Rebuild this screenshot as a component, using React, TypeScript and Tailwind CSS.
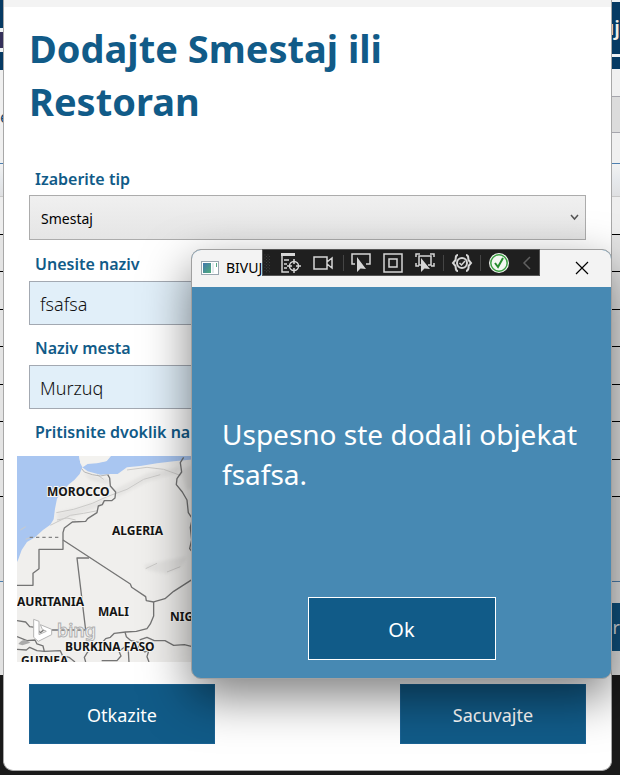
import React, { useState } from "react";

const sans = "font-['Noto_Sans','Open_Sans',sans-serif]";
const tableRows = [1, 2, 3, 4, 5, 6, 7];

function AppBehind() {
  return (
    <div aria-hidden="true" className="absolute inset-0 flex flex-col overflow-hidden bg-[#1a1a1a]">
      <div className="flex justify-between bg-[#eef1f3]">
        <div className="w-1/2">
          <div className="h-7 bg-[#063a63]" />
          <div className="mt-1 h-4 bg-[#34305a]" />
          <div className="mt-1 h-[18px] bg-[#063a63]" />
        </div>
        <div className="w-1/2 pt-0.5">
          <div className="flex h-[52px] items-center justify-end overflow-hidden bg-[#063a63] text-xl font-semibold text-[#f3eee6]">
            uj
          </div>
          <div className="mt-[3px] h-3 bg-[#063a63]" />
        </div>
      </div>
      <div className="flex h-[94px] items-center justify-between border-b border-[#4d7faf] bg-[#f0f0f0]">
        <div className="w-1 overflow-hidden text-base text-[#16486f]">e</div>
        <div className="mb-1 h-[37px] w-1/2 border-y border-[#a6a6ad] bg-[#dcdcdc]" />
      </div>
      <div className="h-[33px] border-b border-[#c8c8c8] bg-linear-to-b from-[#f2f2f2] via-[#e6e9ec] to-[#dfe0e2]" />
      <div className="h-[38px] border-b border-black bg-[#eeeeee]" />
      <div className="grid h-[262px] grid-rows-7">
        {tableRows.map((row) => (
          <div key={row} className="border-b border-black bg-[#e4e4e4]" />
        ))}
      </div>
      <div className="h-[85px] border-b border-[#4d7faf] bg-[#dddddd]" />
      <div className="flex h-[93px] items-center justify-end bg-[#e2e2e2]">
        <div className="mb-1 flex h-12 w-44 items-center justify-end bg-[#0f527f] text-lg text-[#d8dde2]">or</div>
      </div>
    </div>
  );
}

function MapPicture() {
  return (
    <svg className="h-full w-full" role="img" aria-label="Bing mapa">
      <defs>
        <filter id="relief" x="-10%" y="-10%" width="120%" height="120%">
          <feGaussianBlur stdDeviation="5" />
        </filter>
      </defs>
      <g transform="scale(0.3333) translate(-50 -18)">
        <rect x="50" y="18" width="1800" height="620" fill="#f0efed" />
        <path d="M50 18H236L240 40L246 52L238 72L222 90L204 104L186 124L170 146L164 176L160 208L150 224L128 240L104 262L80 276L64 300L54 328L50 336Z" fill="#a9c6f1" />
        <path d="M246 52L262 42L290 40L318 34L330 18H600V26L560 30L520 34L470 40L420 48L380 52L352 72L332 72L300 74L262 64Z" fill="#a9c6f1" />
        <path d="M236 18H332L320 32L290 38L262 40L250 50L240 38Z" fill="#f3f2ef" />
        <g fill="#dedddb" opacity="0.6" filter="url(#relief)">
          <path d="M170 188L240 170L330 140L300 168L230 196L172 214Z" />
          <path d="M340 120L440 70L540 50L530 70L440 96L350 142Z" />
          <path d="M430 345L500 330L560 320L540 352L500 372L440 360Z" />
          <path d="M250 70L330 90L320 104L270 90Z" />
          <path d="M540 60L590 40V110L560 120Z" />
        </g>
        <g fill="none" stroke="#cbcac8" strokeWidth="3">
          <path d="M168 188L220 178L276 160L320 140L380 118L430 88L480 74" />
          <path d="M150 226L210 196L250 190L292 182M380 60L440 52L490 58L540 76M436 356L470 340M500 366L540 350" />
          <path d="M170 210L200 204L226 210M290 74L310 88M60 240L76 230M76 268L92 262" />
        </g>
        <g fill="none" stroke="#747474" strokeWidth="4" strokeLinejoin="round">
          <path d="M322 74L328 84L330 108L346 126L344 144L334 152H312L306 164L294 168L290 188L262 206L256 214L216 216L192 234L188 248V298H116V356L98 370V406H50" />
          <path d="M188 270L390 402L394 412L436 440L438 452L460 456L494 446L520 424L576 388" />
          <path d="M266 324H230L256 540H130L120 548L104 532L88 530L76 516L50 512" />
          <path d="M460 456V498L450 522L440 536L408 544L376 546L342 550L330 562L316 566L304 580L288 578L276 594L262 606L252 622L256 636" />
          <path d="M550 22L540 38L544 66L530 86L528 104L546 126L560 150L564 188L576 206L570 232L574 270L568 296L576 306" />
          <path d="M374 546L378 560L392 572L418 578L414 594L434 606L446 600L440 620L446 636M418 570L440 562L462 572H494L520 586L552 584L576 590" />
          <path d="M50 560L80 572L104 570L110 582L128 588L132 604L180 602L186 616L206 622L224 636M50 598L78 600L88 592L110 602L132 604M304 632H350L362 618L356 604L372 592L384 604L386 636" />
        </g>
        <path d="M244 56L252 66L276 74L300 78L322 74" fill="none" stroke="#b5b5b5" strokeWidth="3" />
        <path d="M88 262H176" fill="none" stroke="#858585" strokeWidth="4" strokeDasharray="10 9" />
        <path d="M54 582Q70 560 90 578L66 586Z" fill="#aaa" />
        <path d="M100 508L116 514V554L138 544L126 538L120 524L154 538V554L114 574L100 562Z" fill="#fff" stroke="#b5b5b5" strokeWidth="3" />
      </g>
      <text x="40" y="181" fontSize="18" fontWeight="600" fill="#f6f6f6" stroke="#b0b0b0" strokeWidth="1">bing</text>
      <g fill="#151515" fontSize="12" fontWeight="700" stroke="#f7f6f4" strokeWidth="2" paintOrder="stroke">
        <text x="30" y="40">MOROCCO</text>
        <text x="95" y="79">ALGERIA</text>
        <text x="0" y="150">AURITANIA</text>
        <text x="81" y="160">MALI</text>
        <text x="153" y="165">NIGER</text>
        <text x="48" y="195">BURKINA FASO</text>
        <text x="4" y="209">GUINEA</text>
      </g>
    </svg>
  );
}

const toolButton = "flex h-6 w-6 shrink-0 items-center justify-center";

function DebugToolbar() {
  return (
    <div role="toolbar" aria-label="Debug" className="absolute -top-px left-[70px] flex h-[27px] w-[278px] items-center border border-[#555555] bg-[#1f1f1f] text-[#d6d6d6]">
      <svg width="10" height="24" viewBox="0 0 10 24" fill="#5a5a5a">
        {[2, 6, 10, 14, 18, 22].map((y) => (
          <g key={y}>
            <rect x="2" y={y - 1} width="1" height="1" />
            <rect x="6" y={y - 1} width="1" height="1" />
            <rect x="4" y={y + 1} width="1" height="1" />
            <rect x="8" y={y + 1} width="1" height="1" />
          </g>
        ))}
      </svg>
      <button aria-label="Live Visual Tree" className={`ml-2 ${toolButton}`}>
        <svg width="22" height="22" viewBox="0 0 22 22" fill="none" stroke="currentColor" strokeWidth="1.5">
          <path d="M1 1H15V4H1Z" fill="currentColor" stroke="none" />
          <path d="M2 4V20H9M4 8H9M4 12H7M4 16H7" />
          <circle cx="14" cy="14" r="4.500" />
          <path d="M14 7V12M14 16V21M7 14H12M16 14H21" />
        </svg>
      </button>
      <button aria-label="Record" className={`ml-2 ${toolButton}`}>
        <svg width="22" height="22" viewBox="0 0 22 22" fill="none" stroke="currentColor" strokeWidth="1.5">
          <path d="M2 5H15V17H2ZM15 10L20 6V16L15 12" />
        </svg>
      </button>
      <span className="ml-2 h-4 w-px bg-[#454545]" />
      <button aria-label="Select element" className={`ml-1.5 ${toolButton}`}>
        <svg width="22" height="22" viewBox="0 0 22 22" fill="none" stroke="currentColor" strokeWidth="1.5">
          <path d="M5 12H2V2H20V12H16" />
          <path d="M7 5V20L10.500 16.500L16 17Z" fill="currentColor" stroke="none" />
        </svg>
      </button>
      <button aria-label="Display layout adorners" className={`ml-2 ${toolButton}`}>
        <svg width="22" height="22" viewBox="0 0 22 22" fill="none" stroke="currentColor" strokeWidth="1.500">
          <path d="M2 2H20V20H2ZM7 7H15V15H7Z" />
        </svg>
      </button>
      <button aria-label="Track focused element" className={`ml-2 ${toolButton}`}>
        <svg width="22" height="22" viewBox="0 0 22 22" fill="none" stroke="currentColor" strokeWidth="1.5">
          <path d="M2 5V2H6M16 2H20V5M2 11V14H5M20 11V14H17M7 13H5V4H17V13H14" />
          <path d="M7 6V20L10.500 16.500L16 17Z" fill="currentColor" stroke="none" />
        </svg>
      </button>
      <span className="ml-1.5 h-4 w-px bg-[#454545]" />
      <button aria-label="Binding failures" className={`ml-1.5 ${toolButton}`}>
        <svg width="22" height="22" viewBox="0 0 22 22" fill="none" stroke="currentColor" strokeWidth="2">
          <path d="M7 3C4 3 5 6 4.500 8L2 11L4.500 14C5 16 4 19 7 19M15 3C18 3 17 6 17.500 8L20 11L17.500 14C18 16 17 19 15 19" />
          <circle cx="11" cy="11" r="5" />
          <path d="M8.500 11L10.500 13L14 9" strokeWidth="1.500" />
        </svg>
      </button>
      <span className="ml-1.5 h-4 w-px bg-[#454545]" />
      <button aria-label="Hot Reload" className={`ml-1.5 ${toolButton}`}>
        <svg width="22" height="22" viewBox="0 0 22 22" fill="none">
          <circle cx="11" cy="11" r="10" fill="#f3f7f2" />
          <circle cx="11" cy="11" r="8.200" stroke="#3da044" strokeWidth="1.500" />
          <path d="M7 11L10 15L15 6" stroke="#258b2d" strokeWidth="2" />
        </svg>
      </button>
      <button aria-label="Collapse" className={`ml-1 ${toolButton} text-[#606060]`}>
        <svg width="12" height="16" viewBox="0 0 12 16" fill="none" stroke="currentColor" strokeWidth="1.500">
          <path d="M9 2L3 8L9 14" />
        </svg>
      </button>
    </div>
  );
}

const labelStyle = "block pl-1.5 text-base leading-6 font-semibold text-[#115b88]";
const inputStyle = "mt-[5px] mb-[11px] block h-11 w-full border border-[#a3a9b2] bg-[#e1eff9] px-2.5 pt-0.5 text-lg font-light text-[#111111] outline-none";
const formButton = "h-[60px] w-[186px] border border-[#1a6293] bg-[#115b88] pt-0.5 text-lg text-white";

function AddWindow() {
  const [name, setName] = useState("fsafsa");
  const [place, setPlace] = useState("Murzuq");
  return (
    <main className="relative mr-2 ml-[3px] overflow-hidden rounded-b-[10px] border-x border-b border-[#a8a8a8] bg-white">
      <div className="h-[7px] bg-[#f3f3f3]" />
      <form className="px-[25px] pt-[15px] pb-[26px]" onSubmit={(e) => e.preventDefault()}>
        <h1 className="max-w-[420px] text-[38px] leading-[53px] font-bold text-[#115b88]">Dodajte Smestaj ili Restoran</h1>
        <label htmlFor="tip" className={`mt-[39px] ${labelStyle}`}>Izaberite tip</label>
        <div className="relative mt-1 mb-3">
          <select id="tip" className="block h-[45px] w-full appearance-none border border-[#acacac] bg-linear-to-b from-[#f0f0f0] to-[#e5e5e5] px-[11px] pt-0.5 text-sm text-black outline-none">
            <option>Smestaj</option>
            <option>Restoran</option>
          </select>
          <svg className="pointer-events-none absolute top-[18px] right-[7px]" width="9" height="8" viewBox="0 0 9 8" fill="none" stroke="#555555" strokeWidth="1.500">
            <path d="M1 2L4.500 6L8 2" />
          </svg>
        </div>
        <label htmlFor="naziv" className={labelStyle}>Unesite naziv</label>
        <input id="naziv" className={inputStyle} value={name} onChange={(e) => setName(e.target.value)} />
        <label htmlFor="mesto" className={labelStyle}>Naziv mesta</label>
        <input id="mesto" className={inputStyle} value={place} onChange={(e) => setPlace(e.target.value)} />
        <p className={labelStyle}>Pritisnite dvoklik na mapu</p>
        <div className="-mx-3 mt-3 h-[206px] overflow-hidden">
          <MapPicture />
        </div>
        <div className="mt-[22px] flex justify-between">
          <button type="button" className={formButton}>Otkazite</button>
          <button type="submit" className={formButton}>Sacuvajte</button>
        </div>
      </form>
    </main>
  );
}

function MessageWindow() {
  return (
    <section role="dialog" aria-label="BIVUJ" className="absolute top-[249px] right-2 w-[421px] rounded-[10px] border border-[#a0a0a0] bg-[#4789b3] shadow-[0_18px_48px_rgba(0,0,0,0.5)]">
      <header className="flex h-[37px] items-center justify-between rounded-t-[9px] bg-[#f3f3f3] pr-[22px] pb-0.5 pl-[9px]">
        <div className="flex items-center gap-[7px] text-sm text-black">
          <svg width="18" height="16" viewBox="0 0 18 16">
            <defs>
              <linearGradient id="appIcon" x1="0" y1="0" x2="1" y2="1">
                <stop offset="0" stopColor="#4276ad" />
                <stop offset="1" stopColor="#4fae7c" />
              </linearGradient>
            </defs>
            <rect x="0.500" y="1.500" width="17" height="13" fill="#fff" stroke="#9aa6b0" />
            <rect x="2" y="3" width="8" height="10" fill="url(#appIcon)" />
            <path d="M11 3H13V13H11Z" fill="#e3ebee" />
            <path d="M15 3H16V7H15Z" fill="#55a884" />
          </svg>
          BIVUJ
        </div>
        <button aria-label="Zatvori" className="text-black">
          <svg width="14" height="14" viewBox="0 0 14 14" fill="none" stroke="currentColor" strokeWidth="1.200">
            <path d="M1 1L13 13M13 1L1 13" />
          </svg>
        </button>
      </header>
      <div className="flex flex-col items-center px-[30px] pt-[127px] pb-[18px] text-white">
        <p className="w-full text-[28px] leading-10">Uspesno ste dodali objekat fsafsa.</p>
        <button className="mt-[103px] h-[63px] w-[188px] border border-white bg-[#115b88] pt-0.5 text-xl">Ok</button>
      </div>
      <DebugToolbar />
    </section>
  );
}

export default function App() {
  return (
    <div className={`relative min-h-screen overflow-hidden pb-1 ${sans}`}>
      <AppBehind />
      <AddWindow />
      <MessageWindow />
    </div>
  );
}
